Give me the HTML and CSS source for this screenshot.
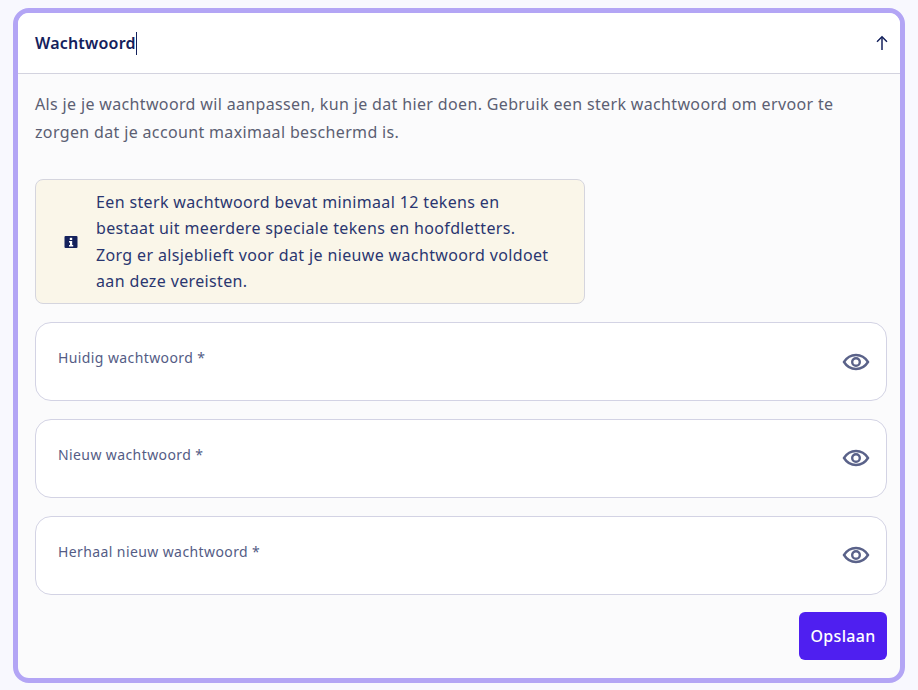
FILE: index.html
```html
<!DOCTYPE html>
<html lang="nl">
<head>
    <meta charset="UTF-8">
    <meta name="viewport" content="width=device-width, initial-scale=1.0">
    <title>Wachtwoord</title>
    <link rel="stylesheet" href="styles.css">
</head>
<body>
    <section class="card">
        <div class="card-header">
            <h2 class="card-title">Wachtwoord<span class="caret"></span></h2>
            <svg class="arrow" width="16" height="16" viewBox="0 0 16 16" fill="none" stroke="currentColor" stroke-width="1.5" aria-hidden="true">
                <path d="M8 15V2"/>
                <path d="M3 6.8 8 1.8l5 5"/>
            </svg>
        </div>
        <div class="card-body">
            <p class="intro">Als je je wachtwoord wil aanpassen, kun je dat hier doen. Gebruik een sterk wachtwoord om ervoor te zorgen dat je account maximaal beschermd is.</p>

            <div class="notice">
                <svg class="notice-icon" width="14" height="14" viewBox="0 0 14 14" aria-hidden="true">
                    <rect x="0.5" y="1" width="13" height="12" rx="1" fill="#14215c"/>
                    <rect x="5.8" y="2.8" width="2.4" height="2.2" fill="#fff"/>
                    <path d="M5 6h3.2v4H9.2v1.4H5V10h1V7.4H5z" fill="#fff"/>
                </svg>
                <p>Een sterk wachtwoord bevat minimaal 12 tekens en bestaat uit meerdere speciale tekens en hoofdletters. Zorg er alsjeblieft voor dat je nieuwe wachtwoord voldoet aan deze vereisten.</p>
            </div>

            <div class="field">
                <span class="field-label">Huidig wachtwoord *</span>
                <svg class="eye" width="28" height="20" viewBox="0 0 28 20" fill="none" stroke="currentColor" stroke-width="2.4" aria-hidden="true">
                    <path d="M2 10C5 5.200 9 3 14 3s9 2.200 12 7C23 14.800 19 17 14 17S5 14.800 2 10Z"/>
                    <circle cx="14" cy="10" r="3.800"/>
                </svg>
            </div>
            <div class="field">
                <span class="field-label">Nieuw wachtwoord *</span>
                <svg class="eye eye-mid" width="28" height="20" viewBox="0 0 28 20" fill="none" stroke="currentColor" stroke-width="2.4" aria-hidden="true">
                    <path d="M2 10C5 5.200 9 3 14 3s9 2.200 12 7C23 14.800 19 17 14 17S5 14.800 2 10Z"/>
                    <circle cx="14" cy="10" r="3.800"/>
                </svg>
            </div>
            <div class="field field-last">
                <span class="field-label">Herhaal nieuw wachtwoord *</span>
                <svg class="eye eye-mid" width="28" height="20" viewBox="0 0 28 20" fill="none" stroke="currentColor" stroke-width="2.4" aria-hidden="true">
                    <path d="M2 10C5 5.200 9 3 14 3s9 2.200 12 7C23 14.800 19 17 14 17S5 14.800 2 10Z"/>
                    <circle cx="14" cy="10" r="3.800"/>
                </svg>
            </div>

            <div class="actions">
                <button class="save-btn" type="button">Opslaan</button>
            </div>
        </div>
    </section>
</body>
</html>
```

FILE: styles.css
```css
body {
    margin: 0;
    height: 690px;
    overflow: hidden;
    padding: 8px 13px 0;
    box-sizing: border-box;
    background-color: #f8f8fe;
    font-family: "Noto Sans", Arial, sans-serif;
    color: #14215c;
}

.card {
    width: 892px;
    height: 675px;
    box-sizing: border-box;
    border: 5px solid #b3a5f5;
    border-radius: 16px;
    background: #fbfbfc;
    overflow: hidden;
}

.card-header {
    display: flex;
    align-items: center;
    justify-content: space-between;
    height: 60px;
    padding: 0 10px 0 17px;
    background: #fff;
    border-bottom: 1px solid #d3d3df;
}

.card-title {
    margin: 0;
    font-size: 16px;
    font-weight: 600;
    letter-spacing: 0.2px;
    display: flex;
    align-items: center;
}

.caret {
    width: 1px;
    height: 23px;
    background: #14215c;
}

.arrow {
    color: #14215c;
}

.card-body {
    padding: 16px 13px 0 17px;
}

.intro {
    margin: 0 0 33px;
    font-size: 16px;
    line-height: 28px;
    letter-spacing: 0.35px;
    color: #5c5f73;
}

.notice {
    display: flex;
    align-items: center;
    gap: 18px;
    width: 550px;
    height: 125px;
    box-sizing: border-box;
    padding: 0 0 0 28px;
    margin-bottom: 18px;
    background: #faf6e9;
    border: 1px solid #d5d5de;
    border-radius: 8px;
}

.notice p {
    margin: 0;
    max-width: 456px;
    font-size: 16px;
    line-height: 26.4px;
    letter-spacing: 0.36px;
    color: #2a3670;
}

.notice-icon {
    flex: none;
}

.field {
    display: flex;
    justify-content: space-between;
    height: 79px;
    box-sizing: border-box;
    padding: 26px 16px 0 22px;
    margin-bottom: 18px;
    background: #fff;
    border: 1px solid #d3d3e4;
    border-radius: 16px;
}

.field-last {
    margin-bottom: 17px;
}

.field-label {
    font-size: 14px;
    line-height: 18px;
    letter-spacing: 0.4px;
    color: #545c85;
}

.eye {
    color: #5a6289;
    margin-top: 3px;
}

.eye-mid {
    margin-top: 2px;
}

.actions {
    display: flex;
    justify-content: flex-end;
}

.save-btn {
    width: 88px;
    height: 48px;
    border: 0;
    border-radius: 6px;
    background: #4f1ff0;
    color: #fff;
    font-family: inherit;
    font-size: 16px;
    font-weight: 500;
    letter-spacing: 0.3px;
}
```
